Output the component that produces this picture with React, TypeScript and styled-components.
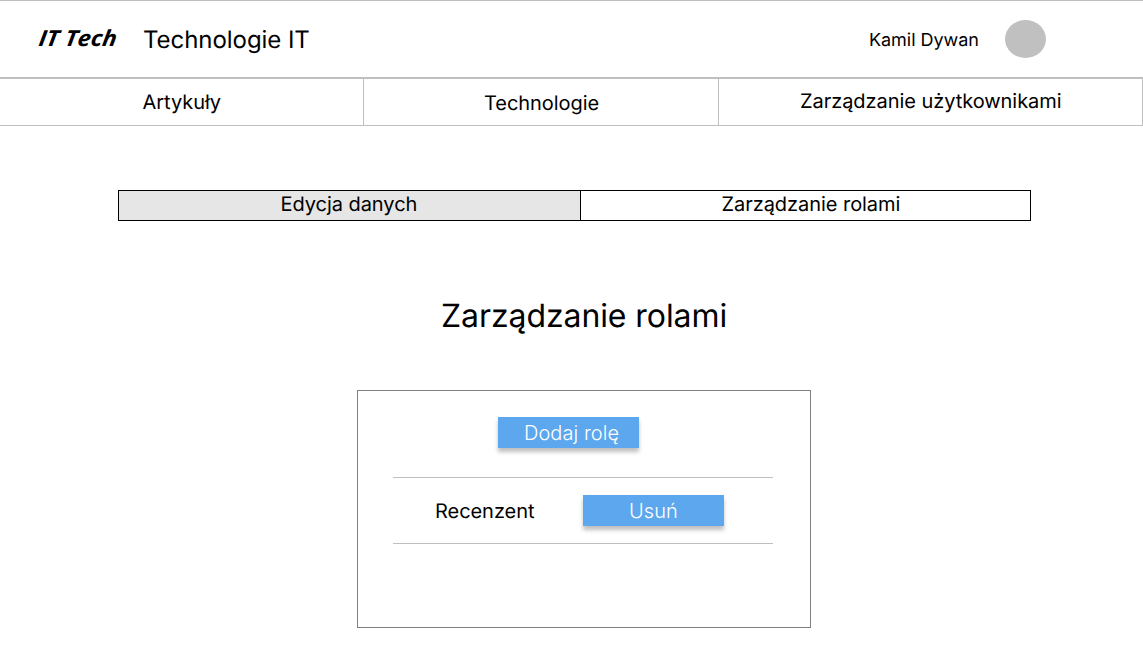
import React from "react";
import styled, { createGlobalStyle } from "styled-components";

const GlobalStyle = createGlobalStyle`
  *, *::before, *::after { box-sizing: border-box; }
  body {
    margin: 0;
    background: #fff;
    color: #000;
    font-family: Inter, "Liberation Sans", sans-serif;
    font-size: 20px;
    line-height: 24px;
    letter-spacing: -0.05px;
    text-rendering: geometricPrecision;
  }
`;

const Page = styled.div`
  width: 1143px;
  height: 648px;
  overflow: hidden;
  display: flex;
  flex-direction: column;
`;

const Header = styled.header`
  display: flex;
  align-items: flex-start;
  height: 79px;
  flex: none;
  border-top: 1px solid #bfbfbf;
  border-bottom: 2px solid #bfbfbf;
  padding: 0 97px 0 39px;
`;

const Logo = styled.span`
  width: 104px;
  margin-top: 22px;
  font: italic 700 22px/30px "Open Sans", "Noto Sans", sans-serif;
  letter-spacing: 0;
  transform: skewX(-8deg) scaleX(1.08);
  transform-origin: 0 50%;
  white-space: nowrap;
`;

const SiteTitle = styled.span`
  margin-top: 24px;
  font-size: 24px;
  line-height: 29px;
  white-space: nowrap;
`;

const User = styled.div`
  display: flex;
  margin-left: auto;
`;

const UserName = styled.span`
  width: 136px;
  margin-top: 29px;
  font-size: 18px;
  line-height: 22px;
  white-space: nowrap;
`;

const Avatar = styled.div`
  width: 41px;
  height: 38px;
  margin-top: 19px;
  border-radius: 50%;
  background: #c0c0c0;
`;

const Nav = styled.nav`
  display: grid;
  grid-template-columns: 364px 355px 424px;
  height: 47px;
  flex: none;
  border-bottom: 1px solid #bfbfbf;
`;

const NavItem = styled.a<{ $top: number; $left: number }>`
  border-right: 1px solid #bfbfbf;
  padding: ${(p) => p.$top}px 0 0 ${(p) => p.$left}px;
  white-space: nowrap;
`;

const Main = styled.main`
  display: flex;
  flex-direction: column;
`;

const Tabs = styled.div`
  display: grid;
  grid-template-columns: 462px 449px;
  width: 913px;
  height: 31px;
  margin: 64px 0 0 118px;
  border: 1px solid #000;
`;

const Tab = styled.div<{ $active?: boolean; $left: number }>`
  background: ${(p) => (p.$active ? "#e6e6e6" : "#fff")};
  border-right: ${(p) => (p.$active ? "1px solid #000" : "none")};
  padding: 1px 0 0 ${(p) => p.$left}px;
  white-space: nowrap;
`;

const Heading = styled.h1`
  margin: 75px 0 0 441px;
  font-size: 32px;
  line-height: 39px;
  font-weight: 400;
  letter-spacing: -0.08px;
  white-space: nowrap;
`;

const Card = styled.section`
  width: 454px;
  height: 238px;
  margin: 55px 0 0 357px;
  padding: 26px 37px 0 35px;
  border: 1px solid #808080;
`;

const Button = styled.button<{ $left: number }>`
  display: block;
  width: 141px;
  height: 31px;
  flex: none;
  border: 0;
  padding: 1px 0 0 ${(p) => p.$left}px;
  background: #5ca7ee;
  box-shadow: 0 4px 4px rgba(0, 0, 0, 0.25);
  color: #fff;
  font: 360 20px/30px Inter, "Liberation Sans", sans-serif;
  letter-spacing: 0.05px;
  text-align: left;
  white-space: nowrap;
`;

const AddRow = styled.div`
  padding: 0 0 29px 105px;
`;

const RoleRow = styled.div`
  display: flex;
  height: 67px;
  border-top: 1px solid #bfbfbf;
  border-bottom: 1px solid #bfbfbf;
  padding: 17px 0 0 42px;
`;

const RoleName = styled.span`
  width: 148px;
  padding-top: 4px;
`;

export default function App() {
  return (
    <Page>
      <GlobalStyle />
      <Header>
        <Logo>IT Tech</Logo>
        <SiteTitle>Technologie IT</SiteTitle>
        <User>
          <UserName>Kamil Dywan</UserName>
          <Avatar />
        </User>
      </Header>
      <Nav>
        <NavItem $top={11} $left={142.5}>Artykuły</NavItem>
        <NavItem $top={12} $left={120}>Technologie</NavItem>
        <NavItem $top={10} $left={81}>Zarządzanie użytkownikami</NavItem>
      </Nav>
      <Main>
        <Tabs>
          <Tab $active $left={161.5}>Edycja danych</Tab>
          <Tab $left={140.5}>Zarządzanie rolami</Tab>
        </Tabs>
        <Heading>Zarządzanie rolami</Heading>
        <Card>
          <AddRow>
            <Button $left={26}>Dodaj rolę</Button>
          </AddRow>
          <RoleRow>
            <RoleName>Recenzent</RoleName>
            <Button $left={46}>Usuń</Button>
          </RoleRow>
        </Card>
      </Main>
    </Page>
  );
}
